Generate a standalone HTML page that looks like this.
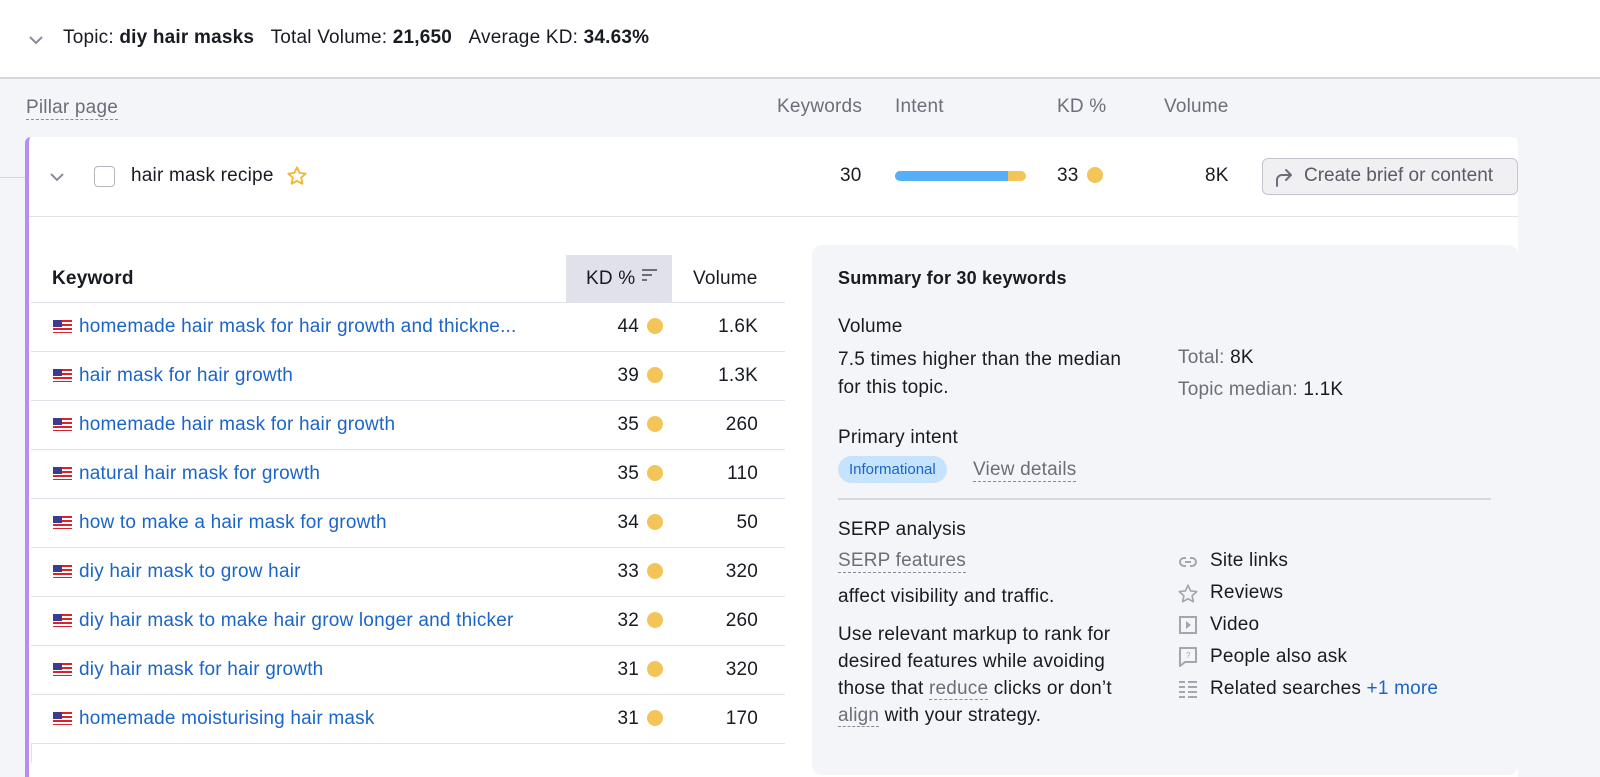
<!DOCTYPE html>
<html><head><meta charset="utf-8"><style>
*{margin:0;padding:0;box-sizing:border-box}
body{width:1600px;height:758px;overflow:hidden;background:#f4f5f9;font-family:"Liberation Sans",sans-serif;color:#191b23;position:relative;font-size:19px;letter-spacing:0.2px}
.a{position:absolute;white-space:nowrap}
.g{color:#6c6e79}
.dash{border-bottom:1px dashed #8a8d99}
.dot{display:inline-block;width:16px;height:16px;border-radius:50%;background:#f3c558;vertical-align:-2px;margin-left:8px}
.flag{display:inline-block;width:19px;height:13px;vertical-align:-1px;margin-right:7px;background:repeating-linear-gradient(#d8232a 0 2px,#fff 2px 4px);position:relative}
.flag:before{content:"";position:absolute;left:0;top:0;width:9px;height:7px;background:#3c3b8e}
.row{position:absolute;left:31px;width:754px;height:49px;border-bottom:1px solid #e0e1e9;background:#fff}
.row .k{position:absolute;left:22px;top:13px;color:#1b65c9}
.row .d{position:absolute;right:122px;top:13px}
.row .v{position:absolute;right:27px;top:13px}
</style></head><body>
<div class="a" style="left:0;top:0;width:1600px;height:79px;background:#fff;border-bottom:2px solid #d5d7df"></div>
<svg class="a" style="left:28px;top:34px" width="16" height="12"><path d="M2 3l6 6 6-6" stroke="#8a8d99" stroke-width="2" fill="none"/></svg>
<div class="a" style="left:63px;top:27px">Topic: <b>diy hair masks</b>&nbsp;&nbsp;&nbsp;Total Volume: <b>21,650</b>&nbsp;&nbsp;&nbsp;Average KD: <b>34.63%</b></div>
<div class="a g dash" style="left:26px;top:96px;line-height:23px">Pillar page</div>
<div class="a g" style="left:777px;top:96px">Keywords</div>
<div class="a g" style="left:895px;top:96px">Intent</div>
<div class="a g" style="left:1057px;top:96px">KD %</div>
<div class="a g" style="left:1164px;top:96px">Volume</div>
<div class="a" style="left:0;top:177px;width:25px;height:1px;background:#d5d7df"></div>
<div class="a" style="left:25px;top:137px;width:1493px;height:640px;background:#fff;border-left:4px solid #b88cf6;border-radius:6px 6px 0 0"></div>
<div class="a" style="left:29px;top:216px;width:1489px;height:1px;background:#e0e1e9"></div>
<svg class="a" style="left:49px;top:171px" width="16" height="12"><path d="M2 3l6 6 6-6" stroke="#8a8d99" stroke-width="2" fill="none"/></svg>
<div class="a" style="left:94px;top:166px;width:21px;height:21px;border:1px solid #b4b6c0;border-radius:4px;background:#fff"></div>
<div class="a" style="left:131px;top:165px">hair mask recipe</div>
<svg class="a" style="left:286px;top:165px" width="22" height="22" viewBox="0 0 24 24"><path d="M12 2.5l2.9 6.2 6.6.7-5 4.5 1.4 6.6L12 17.2l-5.9 3.3 1.4-6.6-5-4.5 6.6-.7z" fill="none" stroke="#f3b72e" stroke-width="2" stroke-linejoin="round"/></svg>
<div class="a" style="left:840px;top:165px">30</div>
<div class="a" style="left:895px;top:171px;width:131px;height:10px;border-radius:5px;background:#f3c558;overflow:hidden"><div style="width:113px;height:10px;background:#55aef6"></div></div>
<div class="a" style="left:1057px;top:165px">33<span class="dot"></span></div>
<div class="a" style="left:1205px;top:165px">8K</div>
<div class="a" style="left:1262px;top:158px;width:256px;height:37px;border:1px solid #c4c6cf;border-radius:6px;background:#f0f0f3"></div>
<svg class="a" style="left:1272px;top:165px" width="24" height="24" viewBox="0 0 24 24"><path d="M5 21v-6a5 5 0 0 1 5-5h9M14 5l5 5-5 5" stroke="#6c6e79" stroke-width="2" fill="none" stroke-linecap="round" stroke-linejoin="round"/></svg>
<div class="a g" style="left:1304px;top:165px;color:#595b66;letter-spacing:0">Create brief or content</div>
<!-- table -->
<div class="a" style="left:31px;top:255px;width:754px;height:48px;border-bottom:1px solid #e0e1e9;background:#fff"></div>
<div class="a" style="left:566px;top:255px;width:106px;height:48px;background:#e0e1e9"></div>
<div class="a" style="left:52px;top:268px;font-weight:bold">Keyword</div>
<div class="a" style="left:586px;top:268px">KD %</div>
<svg class="a" style="left:641px;top:268px" width="18" height="16"><path d="M1 2h15M1 7h10M1 12h5" stroke="#6c6e79" stroke-width="2"/></svg>
<div class="a" style="left:693px;top:268px">Volume</div>
<div class="a" style="left:31px;top:303px;width:1px;height:460px;background:#e0e1e9"></div>
<div class="row" style="top:303px"><span class="a k"><span class="flag"></span>homemade hair mask for hair growth and thickne...</span><span class="a d">44<span class="dot"></span></span><span class="a v">1.6K</span></div>
<div class="row" style="top:352px"><span class="a k"><span class="flag"></span>hair mask for hair growth</span><span class="a d">39<span class="dot"></span></span><span class="a v">1.3K</span></div>
<div class="row" style="top:401px"><span class="a k"><span class="flag"></span>homemade hair mask for hair growth</span><span class="a d">35<span class="dot"></span></span><span class="a v">260</span></div>
<div class="row" style="top:450px"><span class="a k"><span class="flag"></span>natural hair mask for growth</span><span class="a d">35<span class="dot"></span></span><span class="a v">110</span></div>
<div class="row" style="top:499px"><span class="a k"><span class="flag"></span>how to make a hair mask for growth</span><span class="a d">34<span class="dot"></span></span><span class="a v">50</span></div>
<div class="row" style="top:548px"><span class="a k"><span class="flag"></span>diy hair mask to grow hair</span><span class="a d">33<span class="dot"></span></span><span class="a v">320</span></div>
<div class="row" style="top:597px"><span class="a k"><span class="flag"></span>diy hair mask to make hair grow longer and thicker</span><span class="a d">32<span class="dot"></span></span><span class="a v">260</span></div>
<div class="row" style="top:646px"><span class="a k"><span class="flag"></span>diy hair mask for hair growth</span><span class="a d">31<span class="dot"></span></span><span class="a v">320</span></div>
<div class="row" style="top:695px"><span class="a k"><span class="flag"></span>homemade moisturising hair mask</span><span class="a d">31<span class="dot"></span></span><span class="a v">170</span></div>
<!-- summary -->
<div class="a" style="left:812px;top:245px;width:706px;height:530px;background:#f4f5f9;border-radius:10px"></div>
<div class="a" style="left:838px;top:268px;font-weight:bold;font-size:18px">Summary for 30 keywords</div>
<div class="a" style="left:838px;top:316px">Volume</div>
<div class="a" style="left:838px;top:346px;line-height:28px;white-space:normal;width:320px">7.5 times higher than the median<br>for this topic.</div>
<div class="a" style="left:1178px;top:347px"><span class="g">Total:</span> 8K</div>
<div class="a" style="left:1178px;top:379px"><span class="g">Topic median:</span> 1.1K</div>
<div class="a" style="left:838px;top:427px">Primary intent</div>
<div class="a" style="left:838px;top:456px;height:27px;padding:0 11px;border-radius:14px;background:#c5e3fc;color:#1b65c9;font-size:15px;line-height:27px;letter-spacing:0">Informational</div>
<div class="a g dash" style="left:973px;top:458px;line-height:23px">View details</div>
<div class="a" style="left:838px;top:498px;width:653px;height:2px;background:#d5d7df"></div>
<div class="a" style="left:838px;top:519px">SERP analysis</div>
<div class="a g dash" style="left:838px;top:549px;line-height:23px">SERP features</div>
<div class="a" style="left:838px;top:586px">affect visibility and traffic.</div>
<div class="a" style="left:838px;top:621px;line-height:27px;white-space:normal;width:330px">Use relevant markup to rank for<br>desired features while avoiding<br>those that <span class="g dash">reduce</span> clicks or don’t<br><span class="g dash">align</span> with your strategy.</div>
<svg class="a" style="left:1178px;top:552px" width="20" height="20" viewBox="0 0 20 20"><path d="M8 6H6a4 4 0 0 0 0 8h2M12 6h2a4 4 0 0 1 0 8h-2M7 10h6" stroke="#a3a5b0" stroke-width="2" fill="none"/></svg>
<div class="a" style="left:1210px;top:550px">Site links</div>
<svg class="a" style="left:1177px;top:583px" width="22" height="22" viewBox="0 0 24 24"><path d="M12 2.5l2.9 6.2 6.6.7-5 4.5 1.4 6.6L12 17.2l-5.9 3.3 1.4-6.6-5-4.5 6.6-.7z" fill="none" stroke="#a3a5b0" stroke-width="1.8" stroke-linejoin="round"/></svg>
<div class="a" style="left:1210px;top:582px">Reviews</div>
<svg class="a" style="left:1178px;top:615px" width="20" height="20" viewBox="0 0 20 20"><rect x="2" y="2" width="16" height="16" fill="none" stroke="#a3a5b0" stroke-width="2"/><path d="M8 6l5 4-5 4z" fill="#a3a5b0"/></svg>
<div class="a" style="left:1210px;top:614px">Video</div>
<svg class="a" style="left:1178px;top:646px" width="20" height="22" viewBox="0 0 20 22"><path d="M2 2h16v14H7l-5 4z" fill="none" stroke="#a3a5b0" stroke-width="2" stroke-linejoin="round"/><text x="8" y="12" font-size="8" fill="#a3a5b0" font-family="Liberation Sans">?</text></svg>
<div class="a" style="left:1210px;top:646px">People also ask</div>
<svg class="a" style="left:1178px;top:679px" width="20" height="20" viewBox="0 0 20 20"><path d="M1 3h6M10 3h9M1 8h6M10 8h9M1 13h6M10 13h9M1 18h6M10 18h9" stroke="#a3a5b0" stroke-width="2"/></svg>
<div class="a" style="left:1210px;top:678px">Related searches <span style="color:#1b65c9">+1 more</span></div>
</body></html>
